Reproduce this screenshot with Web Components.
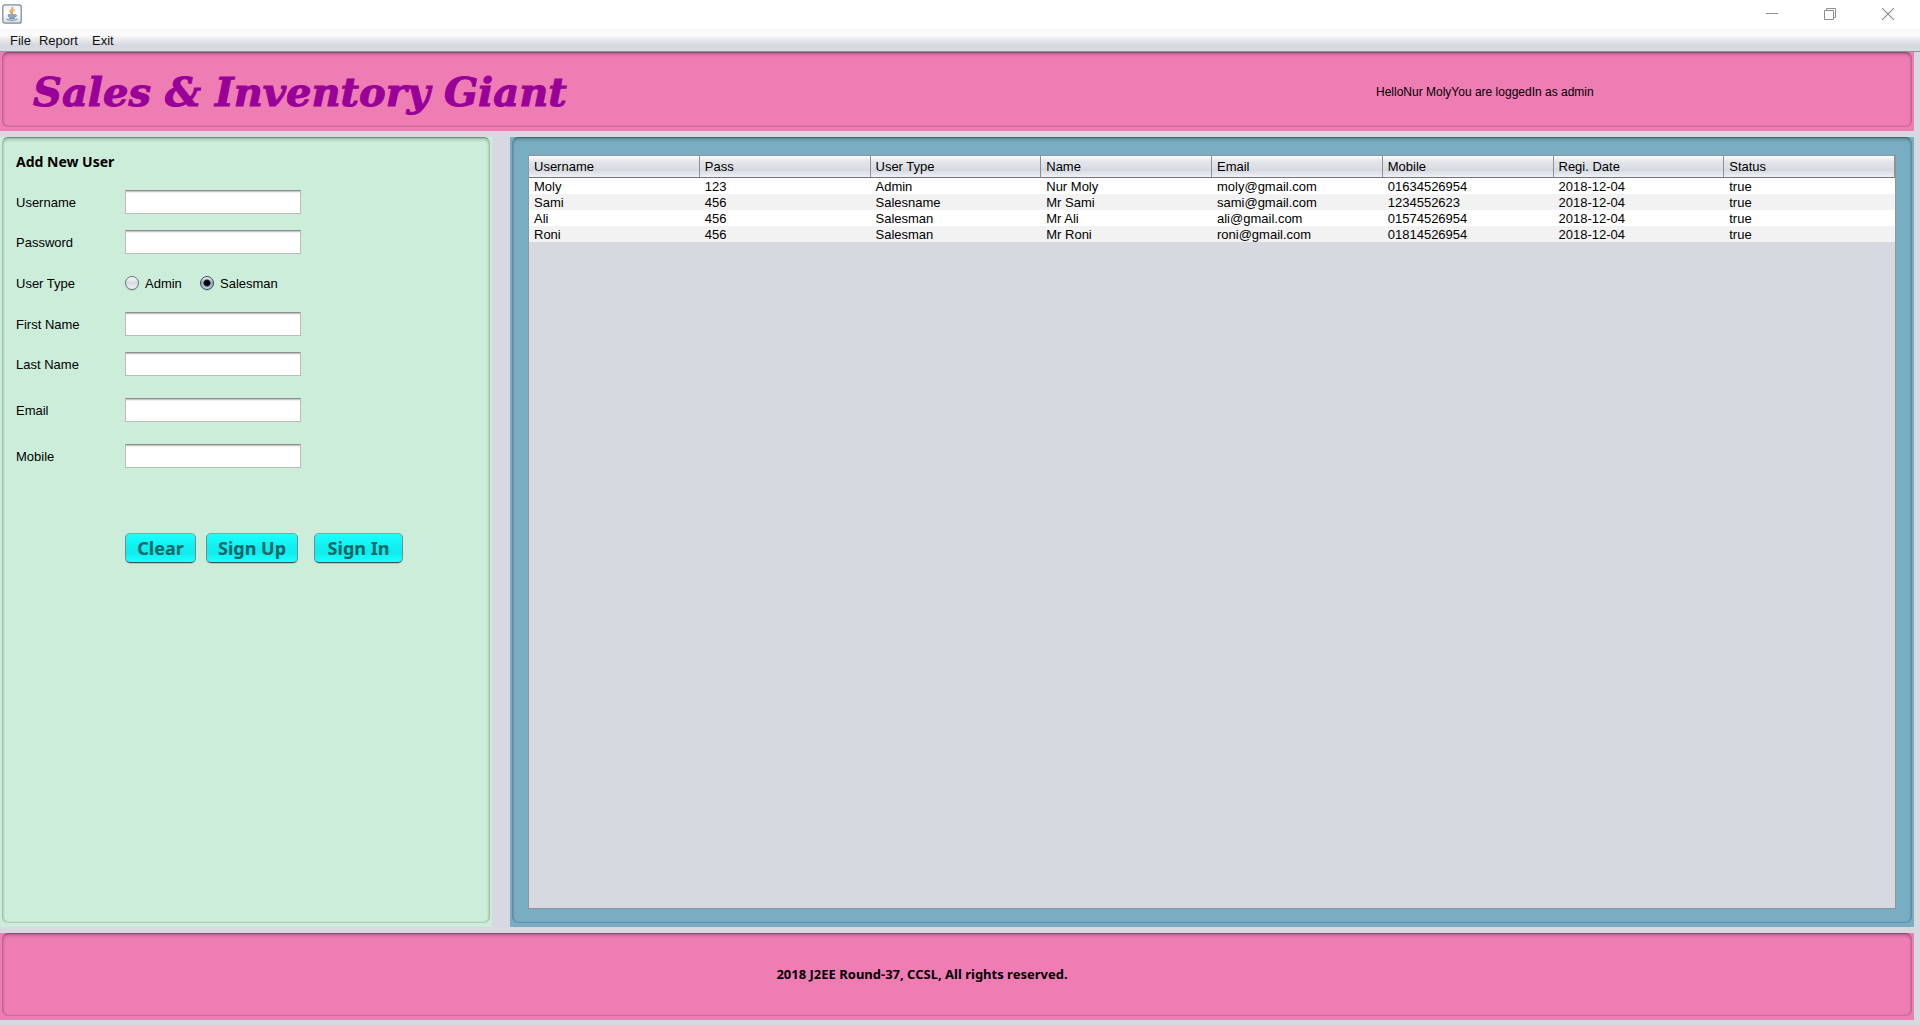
<!DOCTYPE html>
<html lang="en">
<head>
<meta charset="utf-8">
<title>Sales &amp; Inventory Giant</title>
<style>
  html, body { margin: 0; height: 100%; }
  body { font: 13px/16px "Liberation Sans", Arial, sans-serif; color: #000; background: #d6d9e0; }
</style>
</head>
<body>
<inventory-app></inventory-app>

<script>
const define = (name, html, setup) => customElements.define(name, class extends HTMLElement {
  constructor() {
    super();
    const root = this.attachShadow({ mode: "open" });
    root.innerHTML = html;
    if (setup) setup.call(this, root);
  }
});

/* Window caption: program icon and window controls */
define("window-caption", `
  <style>
    :host { display: flex; align-items: center; justify-content: space-between; height: 29px; background: #fff; padding: 0 3px 2px 2px; box-sizing: border-box; }
    svg { display: block; }
    nav { display: flex; }
    button { width: 58px; height: 26px; padding: 0; border: 0; background: none; display: flex; align-items: center; justify-content: center; }
  </style>
  <svg width="20" height="20" viewBox="0 0 20 20">
    <defs><linearGradient id="g" x1="0" y1="0" x2="0" y2="1"><stop offset="0" stop-color="#eef1f4"/><stop offset=".5" stop-color="#fff"/><stop offset="1" stop-color="#d5dbe1"/></linearGradient></defs>
    <rect x=".8" y=".8" width="18.400" height="18.400" rx="2" fill="url(#g)" stroke="#7b8f9f" stroke-width="1.300"/>
    <path d="M10.300 3.500c1.400 1.600-2.700 2.600-2.200 4.200.2.800 1.300 1.300 1.600 2M12.200 5.800c-1.800.8-2.600 1.400-2 2.300.4.600.5.900-.2 1.600" fill="none" stroke="#f0994d" stroke-width="1.400" stroke-linecap="round"/>
    <path d="M6 10.700h7v1.800c0 1.600-6.300 1.600-6.600 0z" fill="#93abbf" stroke="#6b8aa6" stroke-width=".8"/>
    <path d="M13 10.800c2.100-.5 2.100 2-.3 2.200M4.500 15.200c2.600 1.500 8.500 1.400 11-.2M7 14.600h5.500" fill="none" stroke="#6b8aa6" stroke-width="1"/>
  </svg>
  <nav>
    <button aria-label="Minimize"><svg width="12" height="12"><path d="M0 5.5h12" stroke="#8f8f8f"/></svg></button>
    <button aria-label="Restore"><svg width="12" height="12" fill="none" stroke="#8f8f8f"><path d="M.5 2.500h9v9h-9zM2.500 2V.5h9v9H10"/></svg></button>
    <button aria-label="Close"><svg width="12" height="12"><path d="M0 0l12 12M12 0L0 12" stroke="#8a8a8a" stroke-width="1.100"/></svg></button>
  </nav>`);

define("menu-strip", `
  <style>
    :host { display: flex; height: 23px; box-sizing: border-box; padding: 4px 10px 0; border-bottom: 1px solid #8f949c;
      background: linear-gradient(#f8f8f8, #fdfdfd 25%, #e6e8ec 52%, #d5d8df 75%, #d8dbe1); }
    button { font: inherit; color: #111; padding: 0; border: 0; background: none; height: 16px; margin-right: 8px; }
    button:nth-child(3) { margin-right: 14px; }
  </style>
  <button>File</button><button>Report</button><button>Exit</button>`);

/* Coloured panel with a recessed, rounded frame */
define("inset-panel", `
  <style>
    :host { display: flex; box-sizing: border-box; padding: 0 2px 4px; background: var(--panel); }
    div { flex: 1; min-width: 0; display: flex; box-sizing: border-box; border-radius: 6px;
      border: 1px solid rgba(0,0,0,.2); border-top-color: rgba(0,0,0,.42); border-bottom-color: rgba(0,0,0,.14);
      box-shadow: inset 0 2px 3px rgba(0,0,0,.18), inset 0 0 2px rgba(0,0,0,.12); }
  </style>
  <div><slot></slot></div>`);

define("page-header", `
  <style>
    :host { display: block; }
    inset-panel { --panel: #ee7db4; height: 79px; }
    section { flex: 1; display: flex; align-items: center; padding: 4px 0 0 30px; }
    h1 { flex: 1; margin: 0; font: italic bold 40px/44px "DejaVu Serif", serif; color: #909; -webkit-text-stroke: 1px #909; }
    p { margin: 0; width: 535px; font-size: 12px; }
  </style>
  <inset-panel><section><h1>Sales &amp; Inventory Giant</h1><p>HelloNur MolyYou are loggedIn as admin</p></section></inset-panel>`);

define("page-footer", `
  <style>
    :host { display: block; }
    inset-panel { --panel: #ee7db4; height: 87px; }
    p { flex: 1; margin: 0; align-self: center; text-align: center; padding: 0 70px 2px 0; font: bold 13px/16px "Noto Sans", Tahoma, sans-serif; }
  </style>
  <inset-panel><p>2018 J2EE Round-37, CCSL, All rights reserved.</p></inset-panel>`);

define("text-field", `
  <style>
    :host { display: flex; align-items: center; height: 24px; }
    label { width: 109px; padding-top: 2px; }
    input { width: 176px; height: 24px; box-sizing: border-box; padding: 2px 6px; font: inherit; border: 1px solid #b9bcba; border-top-color: #8c8d8d; border-radius: 0; background: #fff; box-shadow: inset 0 1px #c8c8c8, inset 0 2px #efefef; outline: 0; }
  </style>
  <label for="field"></label><input id="field">`, function (root) {
  root.querySelector("label").textContent = this.getAttribute("label");
  root.querySelector("input").type = this.getAttribute("type") || "text";
});

define("user-type", `
  <style>
    :host { display: block; }
    fieldset { display: flex; align-items: center; height: 24px; margin: 0; padding: 0; border: 0; }
    legend { float: left; width: 109px; padding: 2px 0 0; }
    label { display: flex; align-items: center; gap: 6px; width: 75px; }
    span { padding-top: 2px; }
    input { appearance: none; flex: none; width: 14px; height: 14px; margin: 0; border-radius: 50%; border: 1px solid #6d7178; background: linear-gradient(#fafafb, #d8dae1 50%, #f2f3f7); box-shadow: 0 1px rgba(0,0,0,.12); }
    input:checked { border-color: #34485f; background: radial-gradient(circle, #000 0 2px, #20252c 3px, transparent 4px), linear-gradient(#eef2f6, #93a6bb 50%, #c4d4e6); }
  </style>
  <fieldset><legend>User Type</legend>
    <label><input type="radio" name="role"><span>Admin</span></label>
    <label><input type="radio" name="role" checked><span>Salesman</span></label>
  </fieldset>`);

define("action-button", `
  <style>
    :host { display: block; }
    button { display: block; width: 100%; height: 30px; padding: 0; font: bold 18px/24px "Noto Sans", Tahoma, sans-serif; color: #066; border: 1px solid #6a8f90; border-top-color: #8aa3a2; border-bottom-color: #3c5456; border-radius: 5px; background: linear-gradient(#1cffff, #12eeee 50%, #10ebeb 65%, #1cffff); box-shadow: 0 1px rgba(0,0,0,.15); }
  </style>
  <button type="button"><slot></slot></button>`);

define("user-form", `
  <style>
    :host { display: block; flex: 1; }
    form { display: flex; flex-direction: column; padding: 16px 13px; }
    h2 { margin: 0 0 20px; font: bold 14px/16px "Noto Sans", Tahoma, sans-serif; }
    .group { display: flex; flex-direction: column; gap: 16px; margin-bottom: 17px; }
    .wide { gap: 22px; margin: 5px 0 65px; }
    .actions { display: flex; padding-left: 109px; }
    .clear { width: 71px; margin-right: 10px; } .up { width: 92px; margin-right: 16px; } .in { width: 89px; }
  </style>
  <form>
    <h2>Add New User</h2>
    <div class="group"><text-field label="Username"></text-field><text-field label="Password" type="password"></text-field></div>
    <div class="group"><user-type></user-type></div>
    <div class="group"><text-field label="First Name"></text-field><text-field label="Last Name"></text-field></div>
    <div class="group wide"><text-field label="Email" type="email"></text-field><text-field label="Mobile" type="tel"></text-field></div>
    <div class="actions"><action-button class="clear">Clear</action-button><action-button class="up">Sign Up</action-button><action-button class="in">Sign In</action-button></div>
  </form>`);

define("user-table", `
  <style>
    :host { display: block; flex: 1; margin: 17px 15px 13px 15px; border: 1px solid #92939c; background: #d6d9e0; }
    table { width: 100%; table-layout: fixed; border-collapse: separate; border-spacing: 0; }
    th, td { text-align: left; font-weight: normal; padding: 0 0 0 5px; white-space: nowrap; }
    td { height: 14px; line-height: 14px; padding-top: 2px; }
    th { height: 21px; border-bottom: 1px solid #73777c; border-right: 1px solid #8c9097; background: linear-gradient(#fafafb, #e2e4e8 30%, #dcdfe4 55%, #d5d8df 65%, #eef1f6); }
    tbody tr { background: #fff; } tbody tr:nth-child(even) { background: #f2f2f2; }
  </style>
  <table><thead><tr></tr></thead><tbody></tbody></table>`, root => {
  const row = (tag, cells) => cells.map(c => `<${tag}>${c}</${tag}>`).join("");
  root.querySelector("thead tr").innerHTML = row("th", ["Username", "Pass", "User Type", "Name", "Email", "Mobile", "Regi. Date", "Status"]);
  root.querySelector("tbody").innerHTML = [
    ["Moly", "123", "Admin", "Nur Moly", "moly@gmail.com", "01634526954", "2018-12-04", "true"],
    ["Sami", "456", "Salesname", "Mr Sami", "sami@gmail.com", "1234552623", "2018-12-04", "true"],
    ["Ali", "456", "Salesman", "Mr Ali", "ali@gmail.com", "01574526954", "2018-12-04", "true"],
    ["Roni", "456", "Salesman", "Mr Roni", "roni@gmail.com", "01814526954", "2018-12-04", "true"]
  ].map(r => `<tr>${row("td", r)}</tr>`).join("");
});

define("inventory-app", `
  <style>
    :host { display: flex; flex-direction: column; min-height: 100vh; }
    .body { flex: 1; display: flex; flex-direction: column; gap: 6px; padding: 0 6px 5px 0; }
    main { flex: 1; display: flex; gap: 18px; }
    .form { --panel: #ccedd9; width: 492px; }
    .data { --panel: #78adc2; flex: 1; min-width: 0; }
  </style>
  <window-caption></window-caption>
  <menu-strip></menu-strip>
  <div class="body">
    <page-header></page-header>
    <main>
      <inset-panel class="form"><user-form></user-form></inset-panel>
      <inset-panel class="data"><user-table></user-table></inset-panel>
    </main>
    <page-footer></page-footer>
  </div>`);
</script>
</body>
</html>
